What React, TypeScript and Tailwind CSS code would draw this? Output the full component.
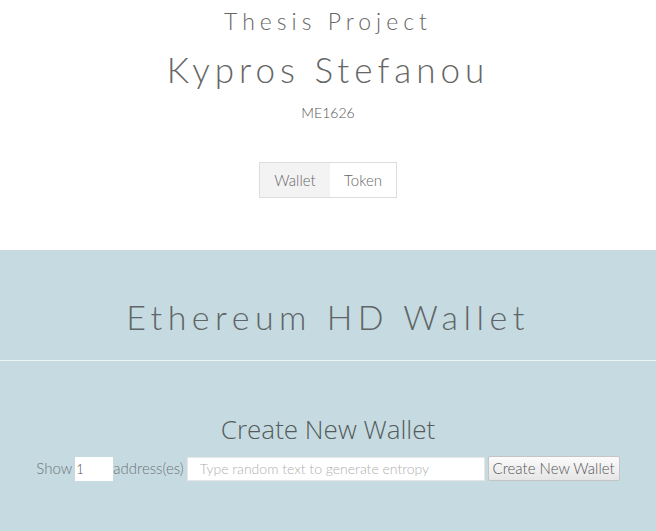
export default function App() {
  return (
    <div className="min-h-[531px] bg-white font-['Lato',sans-serif] text-[#666]">
      {/* Header */}
      <header className="flex flex-col items-center pt-[6px] h-[250px]">
        <h2 className="text-[23px] font-light tracking-[5px] leading-[30px] text-[#666]">Thesis Project</h2>
        <h1 className="mt-[13px] text-[35px] font-light tracking-[5px] leading-[40px] text-[#666]">Kypros Stefanou</h1>
        <div className="mt-[14px] text-[14px] font-light text-[#555] leading-[20px]">ME1626</div>
        <div className="mt-[39px] flex border border-[#ddd] text-[15px] font-light">
          <button className="h-[34px] w-[70px] bg-[#f3f3f3] text-[#666]">Wallet</button>
          <button className="h-[34px] w-[66px] bg-white text-[#666]">Token</button>
        </div>
      </header>

      {/* Wallet section */}
      <section className="bg-[#c6dbe1] h-[281px]">
        <div className="h-[110px] flex items-center justify-center pt-[22px]">
          <h1 className="text-[34px] font-light tracking-[5.5px] text-[#5f6566]">Ethereum HD Wallet</h1>
        </div>
        <div className="h-px bg-[#eef4f6]" />
        <div className="flex flex-col items-center pt-[52px]">
          <h2 className="text-[26px] leading-[32px] font-light text-[#555b5c] font-['Open_Sans',sans-serif]">Create New Wallet</h2>
          <div className="mt-[11px] flex items-center text-[15px] font-light text-[#6d7577]">
            <span className="mr-[3px]">Show</span>
            <input
              defaultValue="1"
              className="h-[24px] w-[38px] bg-white px-[1px] text-[13px] text-[#555] outline-none"
            />
            <span className="mr-[3px]">address(es)</span>
            <input
              placeholder="Type random text to generate entropy"
              className="h-[24px] w-[298px] bg-white px-[12px] text-[14px] font-light text-[#555] placeholder:text-[#b0b0b0] outline-none border border-[#e6e6e6]"
            />
            <button className="ml-[3px] h-[25px] w-[132px] border border-[#c4c4c4] rounded-[2px] bg-gradient-to-b from-[#fbfbfb] to-[#e6e6e6] text-[15px] font-light text-[#555]">
              Create New Wallet
            </button>
          </div>
        </div>
      </section>
    </div>
  );
}
